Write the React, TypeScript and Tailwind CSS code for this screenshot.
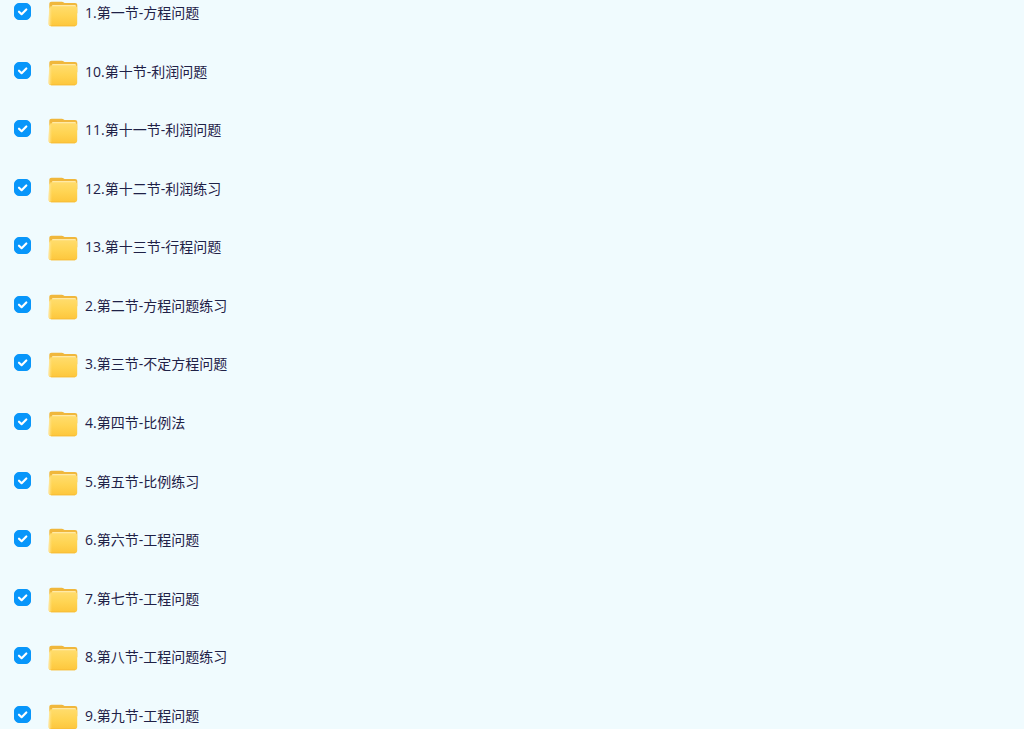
import React, { useState } from 'react';

interface FolderItem {
  id: string;
  name: string;
}

const folders: FolderItem[] = [
  { id: 'folder-1', name: '1.第一节-方程问题' },
  { id: 'folder-10', name: '10.第十节-利润问题' },
  { id: 'folder-11', name: '11.第十一节-利润问题' },
  { id: 'folder-12', name: '12.第十二节-利润练习' },
  { id: 'folder-13', name: '13.第十三节-行程问题' },
  { id: 'folder-2', name: '2.第二节-方程问题练习' },
  { id: 'folder-3', name: '3.第三节-不定方程问题' },
  { id: 'folder-4', name: '4.第四节-比例法' },
  { id: 'folder-5', name: '5.第五节-比例练习' },
  { id: 'folder-6', name: '6.第六节-工程问题' },
  { id: 'folder-7', name: '7.第七节-工程问题' },
  { id: 'folder-8', name: '8.第八节-工程问题练习' },
  { id: 'folder-9', name: '9.第九节-工程问题' }
];

function FolderIcon() {
  return (
    <svg viewBox="0 0 30 27" className="w-[30px] h-[27px] shrink-0" aria-hidden="true">
      <defs>
        <linearGradient id="folder-front" x1="0" y1="0" x2="0" y2="1">
          <stop offset="0" stopColor="#ffdc6c" />
          <stop offset="0.5" stopColor="#ffd452" />
          <stop offset="1" stopColor="#fdc63c" />
        </linearGradient>
        <linearGradient id="folder-edge" x1="0" y1="0" x2="1" y2="0">
          <stop offset="0" stopColor="#ffefbd" />
          <stop offset="1" stopColor="#ffdc6c" stopOpacity="0" />
        </linearGradient>
      </defs>
      {/* back with tab */}
      <path d="M1.300 4c0-1.400.9-2.300 2.300-2.300h10.200c.8 0 1.400.2 2 .7l.7.600h10.500c1.400 0 2.300.9 2.300 2.200v8H1.300z" fill="#f0b73c" />
      <path d="M4 6.100c0-.7.4-1.100 1.100-1.100h21.700c.7 0 1.100.4 1.100 1.100v2H4z" fill="#ffe9a6" />
      {/* front */}
      <path d="M1.300 8.200c0-1.300.8-2 2-2h23.600c1.400 0 2.300.8 2.300 2.100v15.300c0 1.600-.9 2.600-2.500 2.600H3.200c-1.700 0-2.700-1-2.700-2.600z" fill="url(#folder-front)" />
      <path d="M1.100 8.200h3.200v17.600H3c-1.600 0-2.600-1-2.600-2.500z" fill="url(#folder-edge)" />
      <path d="M3.500 25.800h23.200" stroke="#f8ba35" strokeWidth="0.8" strokeLinecap="round" />
    </svg>
  );
}

export default function App() {
  const [selected, setSelected] = useState<string[]>(() => folders.map(f => f.id));

  const toggle = (id: string) => {
    setSelected(prev => (prev.includes(id) ? prev.filter(s => s !== id) : [...prev, id]));
  };

  return (
    <main className="min-h-screen flex flex-col overflow-hidden bg-[#f0fbfe]">
      <ul className="flex-1 flex flex-col justify-between px-[14px]">
        {folders.map(folder => (
          <li key={folder.id} className="flex h-[26px]">
            <label className="flex items-start cursor-pointer">
              <span className="grid mt-[3px] mr-[17px] shrink-0">
                <input
                  type="checkbox"
                  checked={selected.includes(folder.id)}
                  onChange={() => toggle(folder.id)}
                  className="peer col-start-1 row-start-1 appearance-none w-[17px] h-[17px] rounded-[5px] border border-[#b8cbd8] bg-white checked:border-[#0896fa] checked:bg-[#0896fa] cursor-pointer"
                />
                <svg
                  viewBox="0 0 17 17"
                  fill="none"
                  stroke="white"
                  strokeWidth="2.2"
                  strokeLinecap="round"
                  strokeLinejoin="round"
                  className="col-start-1 row-start-1 w-[17px] h-[17px] pointer-events-none invisible peer-checked:visible"
                  aria-hidden="true"
                >
                  <path d="M5 8.700l2.600 2.500 4.700-4.700" />
                </svg>
              </span>
              <FolderIcon />
              <span className="ml-[7px] text-[14px] leading-[26px] text-[#1f2147] whitespace-nowrap font-['Open_Sans','Noto_Sans_CJK_SC',sans-serif]">
                {folder.name}
              </span>
            </label>
          </li>
        ))}
      </ul>
    </main>
  );
}
